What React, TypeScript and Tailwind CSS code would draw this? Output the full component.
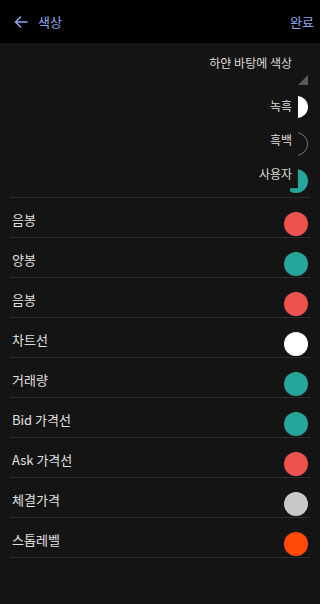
import React from "react";

const font = { fontFamily: '"Noto Sans CJK KR", "Noto Sans", sans-serif' };

type Row = { label: string; color: string };

const rows: Row[] = [
  { label: "음봉", color: "bg-[#ef5350]" },
  { label: "양봉", color: "bg-[#26a69a]" },
  { label: "음봉", color: "bg-[#ef5350]" },
  { label: "차트선", color: "bg-white" },
  { label: "거래량", color: "bg-[#26a69a]" },
  { label: "Bid 가격선", color: "bg-[#26a69a]" },
  { label: "Ask 가격선", color: "bg-[#ef5350]" },
  { label: "체결가격", color: "bg-[#c8c8c8]" },
  { label: "스톱레벨", color: "bg-[#ff4a0a]" },
];

// 오른쪽 반만 보이는 원 (드롭다운 안의 미리보기)
function HalfDot({ className }: { className: string }) {
  return (
    <div className="w-[10px] h-[22px] overflow-hidden">
      <div className={`w-[22px] h-[22px] rounded-full ml-[-12px] ${className}`} />
    </div>
  );
}

export default function App() {
  return (
    <div className="w-[320px] h-[604px] bg-[#141414] text-[#e0e0e0]" style={font}>
      {/* 헤더 */}
      <header className="h-[43px] bg-black flex items-center justify-between pl-[14px] pr-[6px]">
        <div className="flex items-center gap-[10px]">
          <svg width="14" height="12" viewBox="0 0 14 12" fill="none" stroke="#8ea6f2" strokeWidth="1.6" strokeLinecap="round" strokeLinejoin="round">
            <path d="M13 6H1.5M6.5 1L1.5 6l5 5" />
          </svg>
          <span className="text-[13px] text-[#8ea6f2] leading-none">색상</span>
        </div>
        <span className="text-[13px] text-[#8ea6f2] leading-none">완료</span>
      </header>

      {/* 드롭다운 영역 */}
      <div className="h-[154px] flex flex-col items-end pr-[12px] pt-[11px]">
        <div className="flex flex-col items-end pr-[16px]">
          <span className="text-[12px] leading-[18px] text-[#dcdcdc]">하얀 바탕에 색상</span>
        </div>
        <div className="mt-[3px] w-0 h-0 border-l-[10px] border-l-transparent border-b-[10px] border-b-[#5a5a5a]" />
        <div className="mt-[11px] flex items-center gap-[6px]">
          <span className="text-[12px] leading-none text-[#dcdcdc] mb-[3px]">녹흑</span>
          <HalfDot className="bg-white" />
        </div>
        <div className="mt-[14px] flex items-center gap-[6px]">
          <span className="text-[12px] leading-none text-[#dcdcdc] mb-[8px]">흑백</span>
          <div className="w-[10px] h-[24px] overflow-hidden">
            <div className="w-[24px] h-[24px] rounded-full ml-[-14px] border border-[#777]" />
          </div>
        </div>
        <div className="mt-[12px] flex items-center gap-[6px]">
          <span className="text-[12px] leading-none text-[#dcdcdc] mb-[14px]">사용자</span>
          <div className="w-[18px] h-[24px] overflow-hidden ml-[-8px]">
            <div className="w-[24px] h-[24px] rounded-full ml-[-6px] bg-[#26a69a]" style={{ clipPath: "polygon(58% 0, 100% 0, 100% 100%, 0 100%, 0 80%, 58% 80%)" }} />
          </div>
        </div>
      </div>

      {/* 색상 목록 */}
      <div className="border-t border-[#2c2c2c] mx-[10px]">
        {rows.map((r, i) => (
          <div key={i} className="h-[40px] border-b border-[#2c2c2c] flex justify-between pl-[2px] pr-[2px]">
            <span className="text-[13px] leading-none pt-[15px] text-[#e0e0e0]">{r.label}</span>
            <div className={`w-[24px] h-[24px] rounded-full mt-[14px] ${r.color}`} />
          </div>
        ))}
      </div>
    </div>
  );
}
